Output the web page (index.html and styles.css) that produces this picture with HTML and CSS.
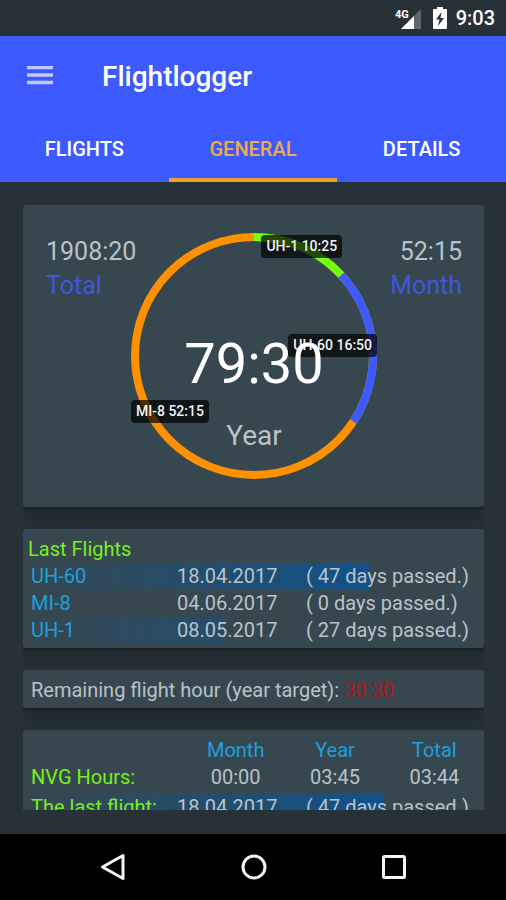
FILE: index.html
```html
<!DOCTYPE html>
<html lang="en">
<head>
<meta charset="utf-8">
<meta name="viewport" content="width=device-width, initial-scale=1">
<title>Flightlogger</title>
<link rel="stylesheet" href="styles.css">
</head>
<body>
<div class="status-bar">
  <svg class="signal" viewBox="0 0 28 24" aria-hidden="true">
    <path class="signal-off" d="M27 3V23H7Z"/>
    <path class="signal-on" d="M20 10V23H7Z"/>
    <text x="1" y="12">4G</text>
  </svg>
  <svg class="battery" viewBox="0 0 14 22" aria-hidden="true">
    <path class="battery-body" d="M4 0H10V2H13Q14 2 14 3V21Q14 22 13 22H1Q0 22 0 21V3Q0 2 1 2H4Z"/>
    <path class="battery-bolt" d="M8.500 5L3 12.500H6.500L5 19L11 11H7.500Z"/>
  </svg>
  <time>9:03</time>
</div>

<header class="app-bar">
  <div class="title-row">
    <button class="menu" aria-label="Menu">
      <svg viewBox="0 0 28 20" aria-hidden="true"><path d="M1 1.500H27M1 9H27M1 16.500H27"/></svg>
    </button>
    <h1>Flightlogger</h1>
  </div>
  <nav class="tabs">
    <button>FLIGHTS</button>
    <button class="active" aria-current="page">GENERAL</button>
    <button>DETAILS</button>
  </nav>
</header>

<main>
  <div class="scroller">
    <section class="card summary">
      <div class="stats">
        <div class="stat"><span>1908:20</span><span class="stat-name">Total</span></div>
        <div class="stat stat-end"><span>52:15</span><span class="stat-name">Month</span></div>
      </div>
      <div class="ring">
        <svg viewBox="0 0 246 246" aria-hidden="true">
          <circle class="arc arc-mi8" cx="123" cy="123" r="119" pathLength="4770"/>
          <circle class="arc arc-uh60" cx="123" cy="123" r="119" pathLength="4770"/>
          <circle class="arc arc-uh1" cx="123" cy="123" r="119" pathLength="4770"/>
        </svg>
        <span class="tag tag-uh1">UH-1 10:25</span>
        <span class="tag tag-uh60">UH-60 16:50</span>
        <span class="tag tag-mi8">MI-8 52:15</span>
        <div class="ring-text">
          <strong>79:30</strong>
          <span>Year</span>
        </div>
      </div>
    </section>

    <section class="card flights">
      <h2>Last Flights</h2>
      <table class="passed">
        <tr class="bar" style="--fill:75%;--strength:.82"><th>UH-60</th><td>18.04.2017</td><td>( 47 days passed.)</td></tr>
        <tr><th>MI-8</th><td>04.06.2017</td><td>( 0 days passed.)</td></tr>
        <tr class="bar" style="--fill:43%;--strength:.42"><th>UH-1</th><td>08.05.2017</td><td>( 27 days passed.)</td></tr>
      </table>
    </section>

    <section class="card remaining">
      <span>Remaining flight hour (year target):</span>
      <span class="alert">30:30</span>
    </section>

    <section class="card nvg">
      <table class="hours">
        <thead><tr><td></td><th>Month</th><th>Year</th><th>Total</th></tr></thead>
        <tbody><tr><th>NVG Hours:</th><td>00:00</td><td>03:45</td><td>03:44</td></tr></tbody>
      </table>
      <table class="passed">
        <tr class="bar" style="--fill:78%;--strength:.82"><th class="green">The last flight:</th><td>18.04.2017</td><td>( 47 days passed.)</td></tr>
      </table>
    </section>
  </div>
</main>

<nav class="system-nav">
  <button aria-label="Back"><svg viewBox="0 0 28 28" aria-hidden="true"><path d="M24 2.500V25.500L3.500 14Z"/></svg></button>
  <button aria-label="Home"><svg viewBox="0 0 28 28" aria-hidden="true"><circle cx="14" cy="14" r="11"/></svg></button>
  <button aria-label="Recent apps"><svg viewBox="0 0 28 28" aria-hidden="true"><rect x="3.500" y="3.500" width="21" height="21" rx="1"/></svg></button>
</nav>
</body>
</html>
```

FILE: styles.css
```css
* {
  box-sizing: border-box;
}

body {
  margin: 0;
  height: 100vh;
  display: flex;
  flex-direction: column;
  background: #263238;
  color: #b9c3c9;
  font: 400 20px/27px Roboto, sans-serif;
}

button {
  border: 0;
  padding: 0;
  background: none;
  color: inherit;
  font: inherit;
}

svg {
  display: block;
}

h1, h2 {
  margin: 0;
}

/* Status bar */
.status-bar {
  flex: none;
  height: 36px;
  padding: 0 11px;
  display: flex;
  align-items: center;
  justify-content: flex-end;
  color: #fff;
  font-weight: 500;
}

.status-bar time {
  margin-left: 9px;
}

.signal {
  width: 28px;
  height: 24px;
  margin-right: 11px;
}

.signal-off { fill: #5c676c; }
.signal-on { fill: #fff; }

.signal text {
  fill: #fff;
  stroke: #263238;
  stroke-width: 2px;
  paint-order: stroke;
  font-size: 11px;
  font-weight: 700;
}

.battery {
  width: 14px;
  height: 22px;
}

.battery-body { fill: #fff; }
.battery-bolt { fill: #263238; }

/* App bar */
.app-bar {
  flex: none;
  background: #3d5afe;
  color: #fff;
}

.title-row {
  height: 80px;
  padding: 0 26px;
  display: flex;
  align-items: center;
  gap: 48px;
}

.menu svg {
  width: 28px;
  height: 20px;
  fill: none;
  stroke: #c0caff;
  stroke-width: 3.5;
}

h1 {
  font-size: 28px;
  font-weight: 500;
}

.tabs {
  height: 66px;
  display: grid;
  grid-template-columns: repeat(3, 1fr);
}

.tabs button {
  border: solid transparent;
  border-width: 4px 0;
  font-weight: 500;
}

.tabs .active {
  color: #f0aa4a;
  border-bottom-color: #e9a32c;
}

/* Content */
main {
  flex: 1;
  min-height: 0;
  padding: 0 22px 24px 23px;
}

.scroller {
  height: 100%;
  padding-top: 23px;
  display: flex;
  flex-direction: column;
  gap: 22px;
  overflow-y: auto;
  scrollbar-width: none;
}

.card {
  flex: none;
  border-radius: 3px;
  background: #37474f;
  box-shadow: 0 2px 2px rgba(0, 0, 0, .2), 0 12px 16px rgba(0, 0, 0, .2);
}

.summary {
  display: grid;
  padding: 28px 22px 28px 23px;
}

.stats, .ring {
  grid-area: 1 / 1;
}

.stats {
  padding-top: 2px;
  display: flex;
  justify-content: space-between;
  font-size: 25px;
  line-height: 34px;
}

.stat {
  display: flex;
  flex-direction: column;
}

.stat-end {
  align-items: flex-end;
}

.stat-name {
  color: #4156df;
}

.ring {
  position: relative;
  justify-self: center;
  width: 246px;
  height: 246px;
}

.arc {
  fill: none;
  stroke-width: 8;
  transform: rotate(-90deg);
  transform-origin: center;
}

/* Dash lengths are minutes flown out of a 4770-minute year. */
.arc-mi8 { stroke: #ff9100; }
.arc-uh60 { stroke: #3d5afe; stroke-dasharray: 1635 4770; }
.arc-uh1 { stroke: #76ff03; stroke-dasharray: 625 4770; }

.tag {
  position: absolute;
  padding: 0 5px;
  border-radius: 4px;
  background: rgba(0, 0, 0, .7);
  color: #f2f2f2;
  font-size: 14px;
  font-weight: 500;
  line-height: 23px;
}

.tag-uh1 { left: 53%; top: 1%; }
.tag-uh60 { right: 0; top: 41%; }
.tag-mi8 { left: 0; top: 68%; }

.ring-text {
  position: absolute;
  inset: 0;
  padding-top: 99px;
  display: flex;
  flex-direction: column;
  align-items: center;
  gap: 24px;
  font-size: 28px;
  line-height: 32px;
}

.ring-text strong {
  color: #fff;
  font-size: 56px;
  font-weight: 400;
  line-height: 64px;
}

.flights {
  padding: 7px 0 4px 5px;
}

h2, .green, .hours tbody th {
  color: #76f01c;
}

h2 {
  font-size: 20px;
  font-weight: 400;
}

table {
  width: 100%;
  table-layout: fixed;
  border-collapse: collapse;
}

th, td {
  padding: 0;
  font-weight: 400;
  text-align: left;
  white-space: nowrap;
}

.passed th, .hours thead th {
  color: #1e9fdf;
}

.passed th:first-child, .hours tbody th {
  padding-left: 3px;
}

.passed th {
  width: 149px;
}

.passed .green {
  color: #76f01c;
}

.passed td:nth-child(2) {
  width: 129px;
}

.bar {
  background: linear-gradient(90deg, rgba(8, 84, 150, 0), rgba(8, 84, 150, var(--strength))) 0 0 / var(--fill) 100% no-repeat;
}

.remaining {
  padding: 7px 8px 4px;
  display: flex;
  gap: 5px;
}

.alert {
  color: #b3161b;
}

.nvg {
  padding: 7px 0 5px 5px;
}

.hours {
  margin-bottom: 3px;
}

.hours :is(th, td):not(:first-child) {
  text-align: center;
}

.hours td:first-child {
  width: 158px;
}

/* System navigation */
.system-nav {
  flex: none;
  height: 66px;
  padding: 0 98px 0 99px;
  display: flex;
  align-items: center;
  justify-content: space-between;
  background: #000;
}

.system-nav svg {
  width: 28px;
  height: 28px;
  fill: none;
  stroke: #f4f4f4;
  stroke-width: 3;
  stroke-linejoin: round;
}
```
